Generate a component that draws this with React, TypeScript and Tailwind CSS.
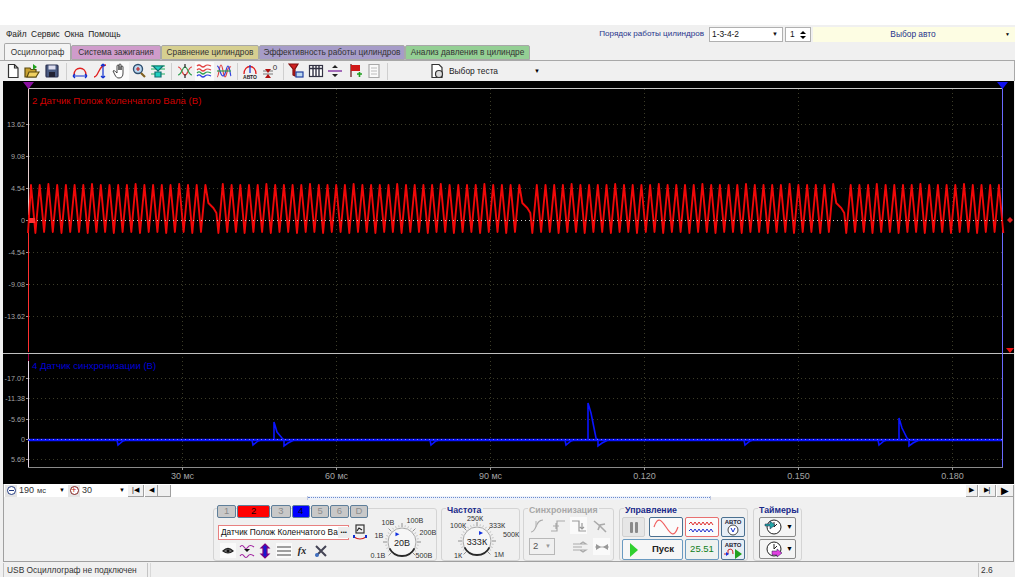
import React from "react"

const FONT = "font-['Liberation_Sans',Arial,sans-serif]"

// red trace: 36 teeth per turn, two of them missing
function buildRedTrace() {
  const period = 8.72
  const pts: string[] = ["28,233", "31,185"]
  for (let k = 0; k < 112; k++) {
    const x = 31 + k * period
    if (x > 1002) break
    if (k % 36 === 21) continue
    const top = 185 - (k % 5 === 2 ? 1 : 0)
    pts.push(`${x.toFixed(1)},${top}`)
    if (k % 36 === 20) {
      pts.push(`${x + 3},203`, `${x + 8},208`, `${x + 11},213`, `${x + 13},233`)
    } else {
      const bottom = 232 + (k % 3 === 0 ? 1 : 0)
      pts.push(`${(x + 4.36).toFixed(1)},${bottom}`)
    }
  }
  return pts.join(" ")
}

function buildBlueTrace() {
  const pts: string[] = ["28,440"]
  const dip = (x: number) => pts.push(`${x - 1},440`, `${x},445`, `${x + 5},441`, `${x + 8},440`)
  const spike = (x: number, top: number) =>
    pts.push(`${x},440`, `${x},${top}`, `${x + 3},${top + 10}`, `${x + 8},438`, `${x + 10},440`, `${x + 10},446`, `${x + 14},443`, `${x + 20},440`)
  dip(118)
  dip(253)
  spike(274, 422)
  dip(431)
  dip(566)
  spike(588, 403)
  dip(745)
  dip(879)
  spike(899, 418)
  pts.push("1002,440")
  return pts.join(" ")
}

const RED_TRACE = buildRedTrace()
const BLUE_TRACE = buildBlueTrace()

const UPPER = [["13.62", 124], ["9.08", 156], ["4.54", 188], ["0", 220], ["-4.54", 252], ["-9.08", 284], ["-13.62", 316]] as const
const LOWER = [["-17.07", 378], ["-11.38", 398], ["-5.69", 419], ["0", 439], ["5.69", 459]] as const
const TIMES = [["30 мс", 182.5], ["60 мс", 336.5], ["90 мс", 490.5], ["0.120", 644.5], ["0.150", 798.5], ["0.180", 952.5]] as const

function Scope() {
  return (
    <svg viewBox="3 81 1011 403" className="block w-[1011px] h-[403px] bg-black">
      {TIMES.map(([, x]) => (
        <line key={x} x1={x} x2={x} y1={89} y2={467} stroke="#3c3c28" strokeDasharray="1 3" />
      ))}
      {[...UPPER, ...LOWER].map(([label, y]) => (
        <g key={`${label}${y}`}>
          <line x1={29} x2={1002} y1={y + 0.5} y2={y + 0.5} stroke="#3c3c28" strokeDasharray="1 3" />
          <line x1={26} x2={28} y1={y + 0.5} y2={y + 0.5} stroke="#999" />
          <text x={25} y={y + 3} textAnchor="end" fontSize={7.2} fill="#a4a4a4" fontFamily="Liberation Sans">{label}</text>
        </g>
      ))}
      <line x1={28} x2={1003} y1={88.5} y2={88.5} stroke="#c8c8c8" />
      <line x1={3} x2={1014} y1={353.5} y2={353.5} stroke="#c0c0c0" />
      <line x1={28} x2={1003} y1={467.5} y2={467.5} stroke="#8a8a8a" />
      <line x1={28.5} x2={28.5} y1={88} y2={215} stroke="#e8d0d0" />
      <line x1={28.5} x2={28.5} y1={215} y2={352} stroke="#ff3030" />
      <line x1={28.5} x2={28.5} y1={354} y2={361} stroke="#a00040" />
      <line x1={28.5} x2={28.5} y1={361} y2={467} stroke="#e8d8e8" />
      <line x1={1002.5} x2={1002.5} y1={88} y2={467} stroke="#6a6aff" />
      {TIMES.map(([label, x]) => (
        <g key={label}>
          <line x1={x} x2={x} y1={467} y2={470} stroke="#999" />
          <text x={x} y={479} textAnchor="middle" fontSize={9} fill="#a4a4a4" fontFamily="Liberation Sans">{label}</text>
        </g>
      ))}
      <text x={32} y={104} fontSize={9.6} fill="#d00000" fontFamily="Liberation Sans">2 Датчик Полож Коленчатого Вала (В)</text>
      <text x={32} y={369} fontSize={9.6} fill="#0000d8" fontFamily="Liberation Sans">4 Датчик синхронизации (В)</text>
      <polyline points={RED_TRACE} fill="none" stroke="#f00808" strokeWidth={1.9} strokeLinejoin="round" />
      <polyline points={BLUE_TRACE} fill="none" stroke="#0a14ff" strokeWidth={1.6} />
      <line x1={29} x2={1002} y1={440} y2={440} stroke="#0a14ff" strokeWidth={2.4} />
      <line x1={29} x2={1002} y1={220.5} y2={220.5} stroke="#c8c8c8" strokeDasharray="1 3" />
      <line x1={29} x2={1002} y1={439.5} y2={439.5} stroke="#8a8aff" strokeDasharray="1 3" />
      <rect x={29} y={218} width={6} height={5} fill="#ff3030" />
      <polygon points="23,82 34,82 28.5,89" fill="#8a10a0" />
      <polygon points="997,82 1008,82 1002.5,89" fill="#1010f0" />
      <polygon points="1006,348 1014,348 1010,353" fill="#f01010" />
      <polygon points="1007,220 1010,217 1013,220 1010,223" fill="#e02020" />
    </svg>
  )
}

const Icon = ({ children, w = 16, h = 16 }: { children: React.ReactNode; w?: number; h?: number }) => (
  <svg viewBox={`0 0 ${w} ${h}`} width={w} height={h} fill="none" strokeWidth={1.2}>{children}</svg>
)

const toolbarGroups: React.ReactNode[][] = [
  [
    <path d="M3.5 1.5h6L13 5v9.500H3.500z M9.500 1.500V5H13" stroke="#333" fill="#fff" />,
    <><path d="M1 14V5h5l1 1.500h5V14z" fill="#c8a030" stroke="#5a4a10" /><path d="M3 14l2-5h10l-3 5z" fill="#f0d060" stroke="#5a4a10" /><path d="M9 1l4 3-4 3z" fill="#20a020" /></>,
    <><rect x="2" y="2" width="12" height="12" rx="1" fill="#4a5a80" stroke="#2a3050" /><rect x="4.500" y="2.500" width="7" height="4" fill="#dde" /><rect x="5" y="9" width="6" height="5" fill="#223" /></>,
  ],
  [
    <><path d="M2 12C2 3 14 3 14 12" stroke="#e02020" strokeWidth={1.5} /><path d="M1 13h14M1 13l2-2M1 13l2 2M15 13l-2-2M15 13l-2 2" stroke="#1030d0" /></>,
    <><path d="M2 14C7 14 6 2 14 2" stroke="#e02020" strokeWidth={1.3} /><path d="M11 1v14M11 1L9 3M11 1l2 2M11 15l-2-2M11 15l2-2" stroke="#1030d0" /></>,
    <path d="M6 8V3a1 1 0 012 0v4V2a1 1 0 012 0v5-3a1 1 0 012 0v6c0 3-1 5-4 5-2 0-3-1-4-3L2 8c1-1 2 0 4 2z" stroke="#333" fill="#fff" strokeWidth={0.9} />,
    <><circle cx="7" cy="6" r="4.500" fill="#bcd8f0" stroke="#305070" strokeWidth={1.4} /><path d="M5 6h4M7 4v4" stroke="#c02020" /><path d="M10 10l4 4" stroke="#806020" strokeWidth={2.2} /></>,
    <><path d="M1 3h14M1 6h14M1 11h14" stroke="#20b060" /><path d="M3 3l5 5 5-5zM5 14h6V9H5z" fill="#20d0c0" stroke="#107070" /></>,
  ],
  [
    <><path d="M1 4C5 4 5 12 8 12S11 4 15 4" stroke="#e04040" /><path d="M1 12C5 12 5 4 8 4S11 12 15 12" stroke="#30a050" /><path d="M8 1v4M8 11v4" stroke="#222" /></>,
    <><path d="M1 3q2-2 4 0t4 0 6 0M1 7q2-2 4 0t4 0 6 0" stroke="#e04040" /><path d="M1 10q2-2 4 0t4 0 6 0" stroke="#30a050" /><path d="M1 13q2-2 4 0t4 0 6 0" stroke="#3040e0" /></>,
    <><path d="M1 14C3 14 3 2 5 2S7 14 9 14 11 2 15 4" stroke="#e04040" /><path d="M1 3C4 3 4 13 7 13S10 3 12 3 14 12 15 13" stroke="#3040e0" /><path d="M1 8h14" stroke="#30a050" /></>,
  ],
  [
    <><path d="M2 11C2 1 14 1 14 11" stroke="#e02020" strokeWidth={1.3} /><path d="M8 2v8" stroke="#1030d0" /><text x="8" y="15.500" fontSize="5" fontWeight="700" fill="#222" textAnchor="middle">АВТО</text></>,
    <><path d="M1 11h10M1 8h10" stroke="#777" /><path d="M3 6l3 4 3-4zM3 15l3-4 3 4z" fill="#b01010" /><text x="13" y="7" fontSize="8" fill="#333" textAnchor="middle">0</text></>,
  ],
  [
    <><path d="M1 1h9L7 6v7l-2-1V6z" fill="#d02020" stroke="#801010" /><rect x="8" y="9" width="7" height="5" fill="#bcd8f0" stroke="#2040a0" /></>,
    <><rect x="1.500" y="2.500" width="13" height="11" fill="#fff" stroke="#334" /><path d="M5 3v10M8 3v10M11 3v10M2 5.500h12" stroke="#334" strokeWidth={1.4} /></>,
    <><path d="M1 8h14" stroke="#8030a0" strokeWidth={1.4} /><path d="M5 5l3-3 3 3zM5 11l3 3 3-3z" fill="#222" /></>,
    <><path d="M4 1v13" stroke="#601010" /><path d="M4 2h9v6H4z" fill="#d01818" /><path d="M10 11h5M12.500 9v5" stroke="#20a020" strokeWidth={1.6} /></>,
    <><path d="M3 1.500h10v13H3z" fill="#fafafa" stroke="#aaa" /><path d="M5 5h6M5 8h6M5 11h6" stroke="#bbb" /></>,
  ],
]

function Toolbar() {
  return (
    <div className="h-[21px] flex items-center border-t border-r border-[#a8a8a8] bg-[#f0f0f0] pl-[3px]">
      {toolbarGroups.map((group, i) => (
        <React.Fragment key={i}>
          {group.map((icon, j) => {
            const on = (i === 1 && j === 2) || (i === 2 && j === 1)
            return (
              <div key={j} className={`w-[19.5px] h-[19px] flex items-center justify-center ${on ? "bg-[#fbfbfb]" : ""}`}>
                <Icon>{icon}</Icon>
              </div>
            )
          })}
          <div className={`w-px h-[17px] bg-[#cfcfcf] ${i === 0 ? "mx-[4px]" : "mx-[3px]"}`} />
        </React.Fragment>
      ))}
      <div className="ml-[38px] flex items-center gap-[4px] w-[111px]">
        <Icon>
          <path d="M3 1.500h7l3 3v10H3z" fill="#fff" stroke="#333" />
          <circle cx="10" cy="11" r="3.500" fill="#ddd" stroke="#333" />
        </Icon>
        <span className="text-[8.4px] text-[#222]">Выбор теста</span>
        <span className="ml-auto text-[6px] text-black">▼</span>
      </div>
    </div>
  )
}

function Header() {
  return (
    <div className="h-[19px] flex items-center justify-between">
      <div className="flex gap-[4.5px] pl-[6px] text-[8.4px] text-[#222]">
        <span>Файл</span>
        <span>Сервис</span>
        <span>Окна</span>
        <span>Помощь</span>
      </div>
      <div className="flex items-center">
        <span className="text-[8.1px] text-[#27348b] mr-[5px]">Порядок работы цилиндров</span>
        <div className="w-[74px] h-[15px] bg-white border border-[#b0b0b0] flex items-center justify-between px-[2px] text-[8.4px] text-[#111]">
          1-3-4-2<span className="text-[6px] mr-[2px]">▼</span>
        </div>
        <div className="w-[26px] h-[15px] ml-[2px] bg-white border border-[#b0b0b0] flex items-center justify-between px-[4px] text-[8.4px] text-[#111]">
          1
          <span className="flex flex-col gap-[2px]">
            <span className="w-0 h-0 border-x-[3px] border-x-transparent border-b-[3px] border-b-black" />
            <span className="w-0 h-0 border-x-[3px] border-x-transparent border-t-[3px] border-t-black" />
          </span>
        </div>
        <div className="w-[202px] h-[15px] ml-[2px] bg-[#fdfde3] flex items-center text-[8.4px] text-[#27348b]">
          <span className="flex-1 text-center pl-[8px]">Выбор авто</span>
          <span className="text-[5px] text-black mr-[5px]">▼</span>
        </div>
      </div>
    </div>
  )
}

const TABS = [
  { label: "Осциллограф", cls: "w-[67px] bg-[#f4f4f4] h-[17px] border-b-0 text-[#111]" },
  { label: "Система зажигания", cls: "w-[90px] bg-[#cf9ccb]" },
  { label: "Сравнение цилиндров", cls: "w-[98px] bg-[#d6cf90]" },
  { label: "Эффективность работы цилиндров", cls: "w-[146px] bg-[#a69cc8]" },
  { label: "Анализ давления в цилиндре", cls: "w-[125px] bg-[#94cf94]" },
]

function Tabs() {
  return (
    <div className="h-[16px] flex items-end pl-[4px]">
      {TABS.map((t) => (
        <div
          key={t.label}
          className={`h-[15px] flex items-center justify-center rounded-t-[2px] border border-[#a8a8a8] text-[8.3px] text-[#333] whitespace-nowrap ${t.cls}`}
        >
          {t.label}
        </div>
      ))}
    </div>
  )
}

function ScrollRow() {
  const navBtn = "h-[12px] bg-[#f0f0f0] border-r border-b border-[#a0a0a0] flex items-center justify-center text-[7px] text-black"
  return (
    <div className="h-[13px] flex items-center border-l border-[#a0a0a0] pl-[1px] bg-white text-[9px] text-[#333]">
      <div className="w-[12px] h-[12px] bg-[#e4e4e4] flex items-center justify-center">
        <div className="w-[9px] h-[9px] rounded-full border border-[#223a80] bg-white flex items-center justify-center">
          <div className="w-[5px] h-px bg-[#223a80]" />
        </div>
      </div>
      <div className="w-[51px] flex items-center pl-[2px]">
        190<span className="ml-[3px] text-[7.5px]">мс</span>
        <span className="ml-auto mr-[3px] text-[6px] text-black">▼</span>
      </div>
      <div className="w-[12px] h-[12px] bg-[#e4e4e4] flex items-center justify-center">
        <div className="w-[9px] h-[9px] rounded-full border border-[#802020] bg-white flex items-center justify-center text-[#c01010] text-[9px] leading-none">+</div>
      </div>
      <div className="w-[48px] flex items-center pl-[2px]">
        30<span className="ml-auto mr-[3px] text-[6px] text-black">▼</span>
      </div>
      <div className={`${navBtn} w-[16px]`}>|◀</div>
      <div className={`${navBtn} w-[13px] ml-px`}>◀</div>
      <div className={`${navBtn} w-[13px]`} />
      <div className="flex-1 relative self-stretch">
        <div className="absolute left-[136px] top-[12px] w-[404px] h-[4px] bg-[#eef2fa] border-x border-[#c0c8e0]">
          <div className="mt-[1px] border-t border-dotted border-[#6a8ad0]" />
        </div>
      </div>
      <div className={`${navBtn} w-[12px]`}>▶</div>
      <div className={`${navBtn} w-[17px] ml-px`}>▶|</div>
      <div className={`${navBtn} w-[17px] ml-px text-[#1030e0] text-[10px]`}>▶</div>
    </div>
  )
}

function Group({ title, muted, className, children }: { title?: string; muted?: boolean; className: string; children: React.ReactNode }) {
  return (
    <div className={`relative h-[53px] rounded-[3px] border border-[#d4d4d4] ${className}`}>
      {title && (
        <span className={`absolute left-[4px] -top-[4px] bg-[#f0f0f0] px-px text-[8.8px] leading-[10px] font-bold whitespace-nowrap ${muted ? "text-[#a8a8a8]" : "text-[#1a2a8a]"}`}>
          {title}
        </span>
      )}
      {children}
    </div>
  )
}

type KnobLabel = readonly [string, number, number]

function Knob({ value, labels, pointer, width, cx, cy }: { value: string; labels: readonly KnobLabel[]; pointer: number; width: number; cx: number; cy: number }) {
  const ticks = Array.from({ length: 25 }, (_, i) => (135 + i * 11.25) * (Math.PI / 180))
  const at = (r: number, a: number) => [cx + r * Math.cos(a), cy + r * Math.sin(a)] as const
  const [px, py] = at(9, pointer)
  const [x1, y1] = at(14, Math.PI * 0.15)
  const [x2, y2] = at(14, Math.PI * 0.85)
  return (
    <svg viewBox={`0 0 ${width} 53`} width={width} height={53} className="block overflow-visible">
      {ticks.map((a, i) => {
        const [ax, ay] = at(15, a)
        const [bx, by] = at(i % 4 === 0 ? 19 : 17, a)
        return <line key={i} x1={ax} y1={ay} x2={bx} y2={by} stroke={i % 4 === 0 ? "#777" : "#b8b8b8"} strokeWidth={0.8} />
      })}
      <circle cx={cx} cy={cy} r={14} fill="#f6f6f6" stroke="#a8a8a8" />
      <path d={`M${x1} ${y1}A14 14 0 0 1 ${x2} ${y2}`} stroke="#2a2a2a" strokeWidth={1.8} fill="none" />
      <polygon points={`${px - 2},${py - 2} ${px + 2},${py} ${px - 2},${py + 2}`} fill="#1030e0" />
      <text x={cx} y={cy + 3.5} textAnchor="middle" fontSize={9} fill="#222" fontFamily="Liberation Sans">{value}</text>
      {labels.map(([t, x, y]) => (
        <text key={t} x={x} y={y} textAnchor="middle" fontSize={7.2} fill="#333" fontFamily="Liberation Sans">{t}</text>
      ))}
    </svg>
  )
}

const CHANNELS = [
  { t: "1", cls: "w-[20px] bg-[#c8c8c8] text-[#8a8a8a]" },
  { t: "2", cls: "w-[34px] bg-[#ff0000] text-[#200000]" },
  { t: "3", cls: "w-[20px] bg-[#c8c8c8] text-[#8a8a8a]" },
  { t: "4", cls: "w-[19px] bg-[#0000ff] text-[#000020]" },
  { t: "5", cls: "w-[19px] bg-[#c8c8c8] text-[#8f8f8f]" },
  { t: "6", cls: "w-[19px] bg-[#c8c8c8] text-[#8f8f8f]" },
  { t: "D", cls: "w-[19px] bg-[#c8c8c8] text-[#8f8f8f]" },
]

const channelTools: React.ReactNode[] = [
  <><path d="M3 8q5-5 10 0-5 4-10 0z" fill="#777" stroke="#222" /><circle cx="8" cy="8" r="1.500" fill="#111" /></>,
  <><path d="M1 4q2-3 4 0t4 0 6 0M1 13q2-3 4 0t4 0 6 0" stroke="#a020a0" /><path d="M5 6h6l-3 3z" fill="#111" /></>,
  <path d="M8 1l4 4h-2v6h2l-4 4-4-4h2V5H4z" fill="#1818d0" stroke="#800080" />,
  <path d="M1 4h14M1 8h14M1 12h14" stroke="#444" />,
]

function ChannelGroup() {
  return (
    <Group className="w-[224px] flex">
      <div className="w-[154px] pl-[3px] -mt-[4px] shrink-0">
        <div className="flex gap-px">
          {CHANNELS.map((c) => (
            <div key={c.t} className={`h-[13px] rounded-[2px] border border-[#5f7f9a] flex items-center justify-center text-[9.5px] ${c.cls}`}>{c.t}</div>
          ))}
        </div>
        <div className="flex items-center mt-[6px]">
          <div className="w-[131px] h-[15px] ml-[1px] bg-white border border-[#e88080] flex items-center pl-[2px] text-[8.3px] text-[#111] whitespace-nowrap">
            <span className="flex-1">Датчик Полож Коленчатого Ва</span>
            <span className="w-[12px] h-[11px] mr-px bg-[#ececec] text-center text-[6px] leading-[11px] shrink-0">•••</span>
          </div>
          <div className="ml-[3px]">
            <Icon>
              <rect x="4" y="1" width="8" height="8" fill="#f0f0f0" stroke="#333" />
              <path d="M5 7l2-3 3 2" stroke="#222" />
              <path d="M2 13q6 4 12 0" stroke="#d02020" />
              <path d="M2 11v3M14 11v3" stroke="#1030d0" strokeWidth={2} />
            </Icon>
          </div>
        </div>
        <div className="flex items-center gap-[2.5px] mt-[3px] pl-[3px]">
          {channelTools.map((tool, i) => (
            <div key={i} className={`w-[16px] h-[15px] flex items-center justify-center ${i === 3 || i === 0 ? "bg-[#fafafa]" : ""}`}>
              <Icon>{tool}</Icon>
            </div>
          ))}
          <div className="w-[16px] text-center text-[10px] italic font-bold font-['Liberation_Serif',serif] text-[#222]">fx</div>
          <div className="w-[16px] h-[15px] flex items-center justify-center">
            <Icon>
              <path d="M3 3l10 10M13 3L3 13" stroke="#445" strokeWidth={2} />
              <circle cx="4" cy="12" r="2" fill="#4070c0" />
            </Icon>
          </div>
        </div>
      </div>
      <Knob
        value="20В"
        pointer={-2.1}
        width={68}
        cx={34}
        cy={33}
        labels={[["10В", 20, 16], ["100В", 47, 14], ["1В", 11, 29], ["200В", 60, 26], ["0.1В", 10, 49], ["500В", 56, 49]]}
      />
    </Group>
  )
}

function FreqGroup() {
  return (
    <Group title="Частота" className="w-[79px] ml-[4px]">
      <Knob
        value="333К"
        pointer={-1.1}
        width={77}
        cx={35}
        cy={32}
        labels={[["250К", 33, 12], ["100К", 16, 19], ["333К", 55, 19], ["500К", 69, 28], ["1К", 16, 49], ["1М", 57, 48]]}
      />
    </Group>
  )
}

const syncIcons: React.ReactNode[] = [
  <><path d="M2 14C8 14 6 2 14 2" stroke="#aaa" /><path d="M7 3v6" stroke="#bbb" /></>,
  <path d="M1 13h6V3h8M3 8h6M6 5v6" stroke="#aaa" />,
  <path d="M1 3h7v10h7M11 5v6M9 9l2 2 2-2" stroke="#999" />,
  <path d="M2 3l6 5 6 6M6 12l2-5 5-1" stroke="#aaa" strokeWidth={1.6} />,
]

function SyncGroup() {
  return (
    <Group title="Синхронизация" muted className="w-[91px] ml-[3px] pt-[8px] pl-[4px]">
      <div className="flex gap-[4px]">
        {syncIcons.map((ic, i) => (
          <div key={i} className={`w-[17px] h-[17px] flex items-center justify-center ${i === 2 ? "bg-[#fafafa]" : ""}`}>
            <Icon>{ic}</Icon>
          </div>
        ))}
      </div>
      <div className="flex items-center mt-[4px] pl-[1px]">
        <div className="w-[26px] h-[17px] border border-[#b8b8b8] flex items-center justify-between px-[3px] text-[9.5px] text-[#555]">
          2<span className="text-[6px] text-[#999]">▼</span>
        </div>
        <div className="w-[17px] h-[17px] ml-[16px] flex items-center justify-center">
          <Icon><path d="M1 8h9M1 5h6M1 11h6M11 3L8 5h6zM11 13l-3-2h6z" stroke="#aaa" /></Icon>
        </div>
        <div className="w-[17px] h-[17px] ml-[5px] bg-[#fafafa] flex items-center justify-center">
          <Icon><path d="M1 8h14" stroke="#bbb" /><path d="M2 5l5 3-5 3zM14 5L9 8l5 3z" fill="#999" /></Icon>
        </div>
      </div>
    </Group>
  )
}

const cellBtn = "rounded-[2px] border flex items-center justify-center"

function AutoGlyph({ play }: { play?: boolean }) {
  return (
    <svg viewBox="0 0 22 18" width={22} height={18}>
      <text x={11} y={6} textAnchor="middle" fontSize={6} fontWeight={700} fill="#223" fontFamily="Liberation Sans">АВТО</text>
      {play ? (
        <>
          <path d="M2 13h4M6 13V9q5-3 5 4" stroke="#d02020" fill="none" />
          <path d="M4 11l3 2-3 2z" fill="#1030e0" />
          <path d="M13 8l7 5-7 5z" fill="#20a020" />
        </>
      ) : (
        <>
          <circle cx={11} cy={12} r={5} fill="#fff" stroke="#444" />
          <path d="M9 10l2 4 2-4" stroke="#1030d0" fill="none" />
        </>
      )}
    </svg>
  )
}

function ControlGroup() {
  return (
    <Group title="Управление" className="w-[129px] ml-[5px] pl-[2px] pt-[8px]">
      <div className="flex gap-[2px]">
        <div className={`${cellBtn} w-[23px] h-[20px] bg-[#e6e6e6] border-[#d0d0d0] gap-[2px]`}>
          <div className="w-[3px] h-[11px] rounded-[1px] bg-[#8a8a8a]" />
          <div className="w-[3px] h-[11px] rounded-[1px] bg-[#8a8a8a]" />
        </div>
        <div className={`${cellBtn} w-[34px] h-[20px] ml-[2px] bg-[#fbfbfb] border-[#4a7090]`}>
          <svg viewBox="0 0 30 16" width={30} height={16}><path d="M3 8C7-4 11 2 15 8S23 20 27 8" stroke="#f06060" strokeWidth={1.2} fill="none" /></svg>
        </div>
        <div className={`${cellBtn} w-[34px] h-[20px] bg-[#fbfbfb] border-[#e87070]`}>
          <svg viewBox="0 0 30 16" width={30} height={16}>
            <path d="M2 5l2-2 2 3 2-3 2 3 2-3 2 3 2-3 2 3 2-3 2 3 2-3 2 3" stroke="#e03030" fill="none" />
            <path d="M2 12l2-2 2 3 2-3 2 3 2-3 2 3 2-3 2 3 2-3 2 3 2-3 2 3" stroke="#2030d0" fill="none" />
          </svg>
        </div>
        <div className={`${cellBtn} w-[24px] h-[20px] bg-[#e6eef6] border-[#4a7090]`}><AutoGlyph /></div>
      </div>
      <div className="flex gap-[2px] mt-[2px]">
        <div className={`${cellBtn} w-[61px] h-[21px] bg-[#f6f6f6] border-[#6a9ac0] justify-start`}>
          <svg viewBox="0 0 10 16" width={10} height={16} className="ml-[6px]"><path d="M1 1l8 7-8 7z" fill="#30d030" /></svg>
          <span className="ml-[13px] text-[9.5px] font-bold text-[#222]">Пуск</span>
        </div>
        <div className={`${cellBtn} w-[34px] h-[21px] bg-[#eef2f0] border-[#6a9ac0] text-[9.5px] text-[#108020]`}>25.51</div>
        <div className={`${cellBtn} w-[24px] h-[21px] bg-[#e6eef6] border-[#4a7090]`}><AutoGlyph play /></div>
      </div>
    </Group>
  )
}

function TimerBtn({ color, flip }: { color: string; flip?: boolean }) {
  return (
    <div className={`${cellBtn} w-[37px] h-[20px] bg-[#f4f4f4] border-[#8a8a8a] pl-[4px] justify-start`}>
      <svg viewBox="0 0 20 18" width={20} height={18}>
        <circle cx={10} cy={9} r={7} fill="#fff" stroke="#222" />
        <path d="M10 4v5l3-3" stroke="#222" fill="none" />
        <path d={flip ? "M8 11h5V9l5 4-5 4v-2H8z" : "M1 6h5V3l5 4-5 4V8H1z"} fill={color} stroke="#224" strokeWidth={0.5} />
      </svg>
      <span className="ml-[2px] text-[7px] text-black">▼</span>
    </div>
  )
}

function TimerGroup() {
  return (
    <Group title="Таймеры" className="w-[49px] ml-[5px] pl-[5px] pt-[8px] flex flex-col gap-[2px]">
      <TimerBtn color="#20a8a8" />
      <TimerBtn color="#e040e0" flip />
    </Group>
  )
}

function Panel() {
  return (
    <div className="h-[65px] border-l border-r border-b border-[#a0a0a0] flex items-start pl-[209px] pt-[11px]">
      <ChannelGroup />
      <FreqGroup />
      <SyncGroup />
      <ControlGroup />
      <TimerGroup />
    </div>
  )
}

function StatusBar() {
  return (
    <div className="h-[14px] flex items-center text-[8.4px] text-[#333] mt-px whitespace-nowrap">
      <div className="w-[145px] h-full border-l border-r border-[#c4c4c4] pl-[3px] leading-[14px]">USB Осциллограф не подключен</div>
      <div className="flex-1 h-full ml-[2px] border-l border-[#d8d8d8]" />
      <div className="w-[36px] h-full border-l border-[#c4c4c4] pl-[2px] leading-[14px]">2.6</div>
    </div>
  )
}

export default function App() {
  return (
    <div className={`w-[1024px] h-[580px] bg-white pt-[25px] overflow-hidden ${FONT}`}>
      <div className="w-[1015px] bg-[#f0f0f0]">
        <Header />
        <Tabs />
        <Toolbar />
        <div className="pl-[3px] pr-px"><Scope /></div>
        <div className="pl-[3px] pr-px"><ScrollRow /></div>
        <div className="pl-[3px] pr-px"><Panel /></div>
        <div className="pl-[3px] pr-px"><StatusBar /></div>
      </div>
    </div>
  )
}
